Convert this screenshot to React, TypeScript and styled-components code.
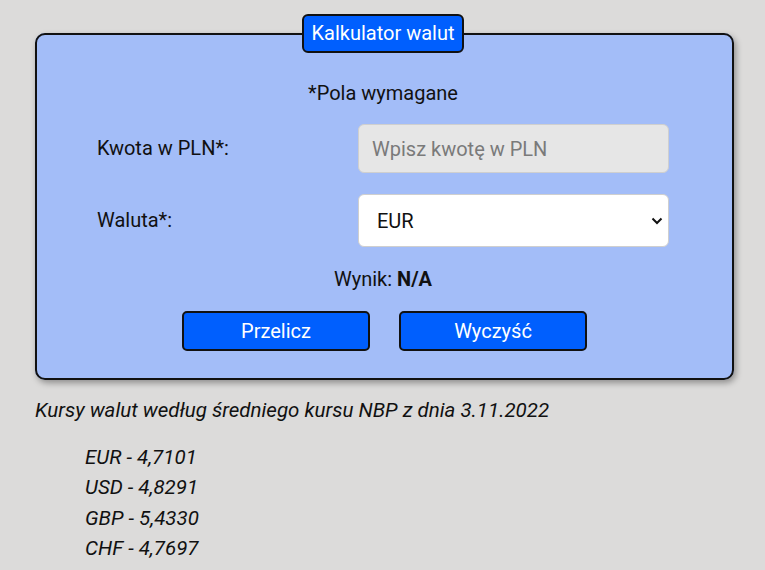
import React from "react";
import styled, { createGlobalStyle } from "styled-components";

const Global = createGlobalStyle`
  html, body { margin: 0; padding: 0; background: #dcdbda; }
  body { font-family: Roboto, "Liberation Sans", sans-serif; color: #111; }
  * { box-sizing: border-box; }
`;

const Page = styled.main`
  padding: 14px 31px 0 35px;
  width: 765px;
`;

const Card = styled.fieldset`
  margin: 0;
  width: 699px;
  border: 2px solid #111;
  border-radius: 10px;
  background: #a3bdf8;
  box-shadow: 2px 3px 6px rgba(0, 0, 0, 0.35);
  padding: 0 63px 27px 60px;
  display: flex;
  flex-direction: column;
  align-items: stretch;
`;

const Legend = styled.legend`
  margin: 0 auto;
  padding: 6px 7px;
  background: #005ffe;
  color: #fff;
  border: 2px solid #111;
  border-radius: 6px;
  font-size: 20px;
  font-weight: 400;
  line-height: 23px;
`;

const Note = styled.p`
  margin: 29px 0 0;
  text-align: center;
  font-size: 20px;
  line-height: 23px;
`;

const Grid = styled.div`
  display: grid;
  grid-template-columns: 1fr 311px;
  row-gap: 21px;
  align-items: center;
  margin-top: 19px;
`;

const Label = styled.label`
  font-size: 20px;
  line-height: 23px;
`;

const Input = styled.input`
  height: 49px;
  width: 311px;
  border: 1px solid #cfcfcf;
  border-radius: 6px;
  background: #e6e6e6;
  padding: 0 13px;
  font-family: Roboto, "Liberation Sans", sans-serif;
  font-size: 20px;
  color: #111;
  &::placeholder { color: #7a7a7a; }
  outline: none;
`;

const SelectWrap = styled.div`
  position: relative;
  height: 53px;
  width: 311px;
`;

const Select = styled.select`
  appearance: none;
  width: 100%;
  height: 100%;
  border: 1px solid #cfcfcf;
  border-radius: 6px;
  background: #fff;
  padding: 0 18px;
  font-family: Roboto, "Liberation Sans", sans-serif;
  font-size: 20px;
  color: #111;
  outline: none;
`;

const Chevron = styled.svg`
  position: absolute;
  right: 6px;
  top: 23px;
  pointer-events: none;
`;

const Result = styled.p`
  margin: 21px 0 0;
  text-align: center;
  font-size: 20px;
  line-height: 23px;
`;

const Buttons = styled.div`
  display: flex;
  justify-content: center;
  gap: 29px;
  margin-top: 20px;
  padding-left: 3px;
`;

const Button = styled.button`
  width: 188px;
  height: 40px;
  background: #005ffe;
  color: #fff;
  border: 2px solid #111;
  border-radius: 5px;
  font-family: Roboto, "Liberation Sans", sans-serif;
  font-size: 20px;
  font-weight: 400;
  cursor: pointer;
`;

const Rates = styled.section`
  font-style: italic;
  font-size: 20.5px;
`;

const RatesTitle = styled.p`
  margin: 18px 0 0;
  line-height: 24px;
`;

const RateList = styled.ul`
  list-style: none;
  margin: 20px 0 0;
  padding-left: 50px;
`;

const RateItem = styled.li`
  line-height: 30.4px;
`;

const rates = [
  ["EUR", "4,7101"],
  ["USD", "4,8291"],
  ["GBP", "5,4330"],
  ["CHF", "4,7697"],
];

export default function App() {
  return (
    <>
      <Global />
      <Page>
        <Card>
          <Legend>Kalkulator walut</Legend>
          <Note>*Pola wymagane</Note>
          <Grid>
            <Label htmlFor="kwota">Kwota w PLN*:</Label>
            <Input id="kwota" placeholder="Wpisz kwotę w PLN" />
            <Label htmlFor="waluta">Waluta*:</Label>
            <SelectWrap>
              <Select id="waluta" defaultValue="EUR">
                <option>EUR</option>
                <option>USD</option>
                <option>GBP</option>
                <option>CHF</option>
              </Select>
              <Chevron width="12" height="8" viewBox="0 0 12 8">
                <path d="M1.5 1.5 L6 6 L10.5 1.5" fill="none" stroke="#111" strokeWidth="2" />
              </Chevron>
            </SelectWrap>
          </Grid>
          <Result>
            Wynik: <b>N/A</b>
          </Result>
          <Buttons>
            <Button>Przelicz</Button>
            <Button>Wyczyść</Button>
          </Buttons>
        </Card>
        <Rates>
          <RatesTitle>Kursy walut według średniego kursu NBP z dnia 3.11.2022</RatesTitle>
          <RateList>
            {rates.map(([c, v]) => (
              <RateItem key={c}>
                {c} - {v}
              </RateItem>
            ))}
          </RateList>
        </Rates>
      </Page>
    </>
  );
}
